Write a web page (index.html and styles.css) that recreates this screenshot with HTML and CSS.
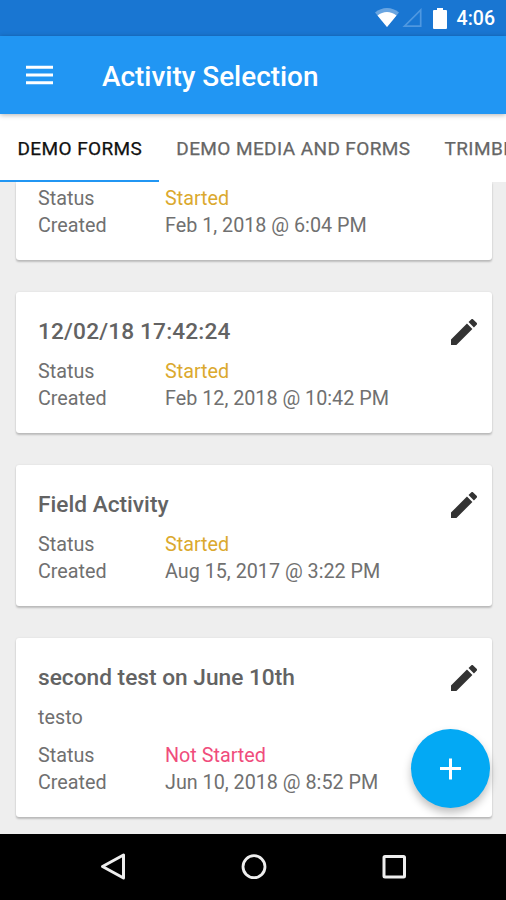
FILE: index.html
```html
<!DOCTYPE html>
<html lang="en">
<head>
<meta charset="utf-8">
<title>Activity Selection</title>
<link rel="stylesheet" href="styles.css">
</head>
<body>
<svg class="defs" width="0" height="0"><symbol id="pencil" viewBox="3 3 18 18"><path d="M3 17.250V21h3.750L17.810 9.940l-3.750-3.750L3 17.250zM20.710 7.040a1 1 0 0 0 0-1.410l-2.340-2.340a1 1 0 0 0-1.410 0l-1.830 1.830 3.750 3.750 1.830-1.830z"/></symbol></svg>
<div class="screen">
  <div class="statusbar">
    <svg class="wifi" width="24" height="20" viewBox="0 0 24 20"><path d="M0 4.500C7-1.500 17-1.500 24 4.500L12 19z" fill="#fff" opacity=".35"/><path d="M2.500 7.500C8 2.800 16 2.800 21.500 7.500L12 19z" fill="#fff"/></svg>
    <svg class="signal" width="20" height="20" viewBox="0 0 20 20"><path d="M2.500 18.200H18.700V2z" fill="none" stroke="#4f98e0" stroke-width="1.700"/></svg>
    <svg class="battery" width="14" height="21" viewBox="0 0 14 21"><path d="M4 0h6v2h3q1 0 1 1v17q0 1-1 1H1q-1 0-1-1V3q0-1 1-1h3z" fill="#fff"/></svg>
    <span class="time">4:06</span>
  </div>
  <header class="appbar">
    <svg class="menu" width="27" height="20" viewBox="0 0 27 20"><path d="M0 2.200h27M0 10h27M0 17.800h27" stroke="#fff" stroke-width="3"/></svg>
    <h1>Activity Selection</h1>
  </header>
  <nav class="tabs">
    <span class="tab active">DEMO FORMS</span>
    <span class="tab">DEMO MEDIA AND FORMS</span>
    <span class="tab">TRIMBLE</span>
  </nav>
  <main class="list">
    <article class="card">
      <dl><dt>Status</dt><dd class="started">Started</dd><dt>Created</dt><dd>Feb 1, 2018 @ 6:04 PM</dd></dl>
    </article>
    <article class="card">
      <div class="head"><h2 class="stamp">12/02/18 17:42:24</h2><svg class="edit"><use href="#pencil"/></svg></div>
      <dl><dt>Status</dt><dd class="started">Started</dd><dt>Created</dt><dd>Feb 12, 2018 @ 10:42 PM</dd></dl>
    </article>
    <article class="card">
      <div class="head"><h2>Field Activity</h2><svg class="edit"><use href="#pencil"/></svg></div>
      <dl><dt>Status</dt><dd class="started">Started</dd><dt>Created</dt><dd>Aug 15, 2017 @ 3:22 PM</dd></dl>
    </article>
    <article class="card">
      <div class="head"><h2>second test on June 10th</h2><svg class="edit"><use href="#pencil"/></svg></div>
      <p>testo</p>
      <dl><dt>Status</dt><dd class="pending">Not Started</dd><dt>Created</dt><dd>Jun 10, 2018 @ 8:52 PM</dd></dl>
    </article>
  </main>
  <div class="fab"><svg width="22" height="22" viewBox="0 0 22 22"><path d="M10.500 .5v21M0 10.500h21" stroke="#fff" stroke-width="3"/></svg></div>
  <footer class="navbar">
    <svg width="28" height="30" viewBox="0 0 28 30"><path d="M3.500 14.500 24.500 3V26z" fill="none" stroke="#eee" stroke-width="3" stroke-linejoin="round"/></svg>
    <svg width="28" height="30" viewBox="0 0 28 30"><circle cx="14" cy="14.700" r="11" fill="none" stroke="#eee" stroke-width="2.800"/></svg>
    <svg width="28" height="30" viewBox="0 0 28 30"><rect x="4" y="4.500" width="20.500" height="20.500" rx="1" fill="none" stroke="#eee" stroke-width="3"/></svg>
  </footer>
</div>
</body>
</html>
```
FILE: styles.css
```css
* { box-sizing: border-box; }
body { margin: 0; font-family: Roboto, sans-serif; color: #707070; }
h1, h2, p, dl, dd { margin: 0; }
svg { display: block; flex: none; }
.defs { position: absolute; }
.screen { position: relative; width: 506px; height: 900px; overflow: hidden; display: flex; flex-direction: column; background: #eee; }
.statusbar { flex: none; height: 36px; background: #1976d2; display: flex; align-items: center; justify-content: flex-end; padding-right: 11px; }
.wifi { margin-right: 3px; }
.signal { margin-right: 2px; }
.battery { margin-left: 9px; }
.time { margin-left: 10px; color: #fff; font-size: 19.5px; font-weight: 500; line-height: 36px; padding-top: 2px; }
.appbar { position: relative; z-index: 2; flex: none; height: 78px; background: #2196f3; display: flex; align-items: center; padding-left: 26px; box-shadow: 0 1px 5px rgba(0, 0, 0, .3); }
.appbar h1 { margin-left: 49px; padding-top: 3px; color: #fff; font-size: 27.9px; font-weight: 500; white-space: nowrap; }
.tabs { position: relative; z-index: 1; flex: none; height: 68px; background: #fff; display: flex; }
.tab { flex: none; padding: 0 16.5px 0 17.5px; line-height: 70px; height: 68px; font-size: 19px; letter-spacing: .4px; white-space: nowrap; color: #666; -webkit-text-stroke: .25px; }
.tab.active { color: #111; border-bottom: 2px solid #2196f3; }
.list { flex: none; height: 652px; overflow: hidden; padding: 0 14px 0 16px; }
.card { height: 141px; padding: 22px 15px 0 22px; margin-bottom: 32px; background: #fff; border-radius: 3px; box-shadow: 0 2px 2px rgba(0, 0, 0, .2), 0 0 2px rgba(0, 0, 0, .1); }
.card:first-child { height: 78px; padding-top: 3px; border-radius: 0 0 3px 3px; }
.card:last-child { height: 179px; margin-bottom: 0; }
.head { display: flex; justify-content: space-between; align-items: center; height: 32px; margin-bottom: 12px; }
.head h2 { padding-top: 4px; font-size: 22.7px; font-weight: 500; line-height: 32px; white-space: nowrap; color: #636363; }
.head .stamp { letter-spacing: .15px; }
.edit { width: 26px; height: 26px; fill: #333; margin-top: 3px; }
.card p { font-size: 19.75px; line-height: 27px; margin-bottom: 11px; }
dl { display: grid; grid-template-columns: 127px 1fr; font-size: 19.75px; line-height: 27px; }
.started { color: #dba92e; }
.pending { color: #f04c7c; }
.fab { position: absolute; left: 411px; top: 729px; width: 79px; height: 79px; border-radius: 50%; background: #03a9f4; display: flex; align-items: center; justify-content: center; box-shadow: 0 5px 9px rgba(0, 0, 0, .25); }
.navbar { position: relative; flex: none; height: 66px; background: #000; display: flex; justify-content: space-between; align-items: center; padding: 0 98px 0 99px; }
```
